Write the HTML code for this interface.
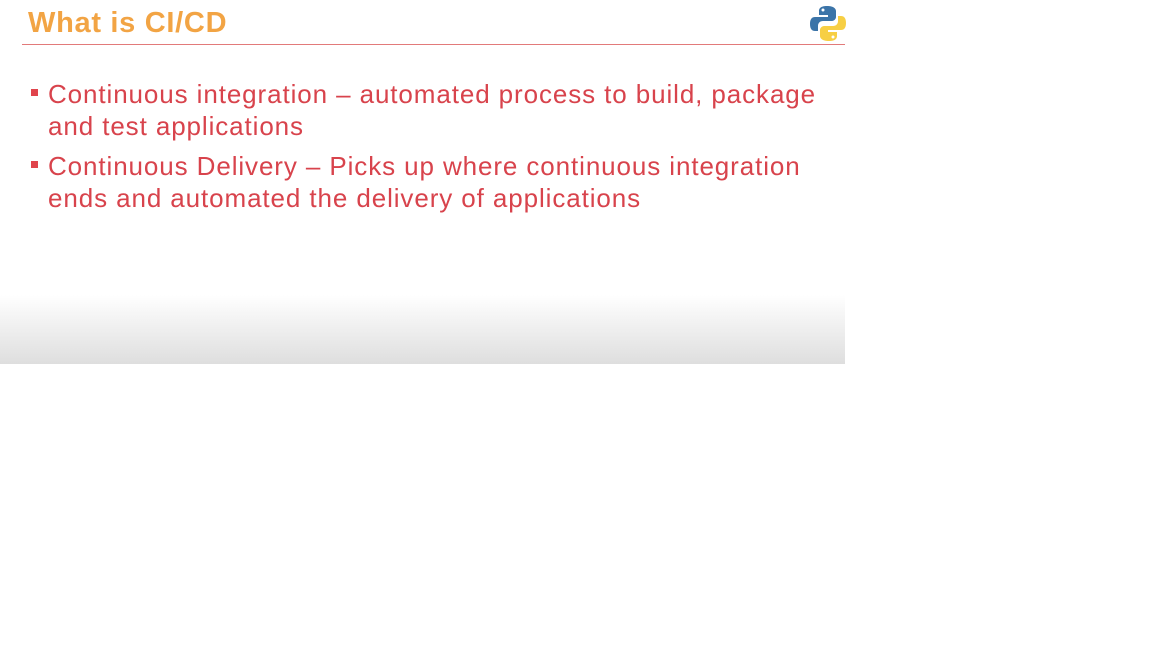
<!DOCTYPE html>
<html><head><style>
body{margin:0;width:1152px;height:648px;background:#fff;position:relative;overflow:hidden;font-family:"Liberation Sans",sans-serif}
.slide{position:absolute;left:0;top:0;width:845px;height:364px;background:linear-gradient(to bottom,#fff 0,#fff 295px,#f3f3f3 320px,#dedede 364px)}
.title{position:absolute;left:28px;top:7px;font-size:29px;font-weight:bold;color:#F2A444;letter-spacing:0.7px}
.line{position:absolute;left:22px;top:44px;width:823px;height:1px;background:#E27A7A}
.b{position:absolute;left:48px;font-size:26px;line-height:32px;color:#D8434C;white-space:nowrap;letter-spacing:0.9px}
.sq{position:absolute;left:31px;width:7px;height:7px;background:#E0444C}
</style></head><body>
<div class="slide">
<div class="title">What is CI/CD</div>
<div class="line"></div>
<svg style="position:absolute;left:810px;top:5px" width="36" height="37" viewBox="0 0 36 37">
<path d="M17 1c-7 0-8 3-8 5v4h9v2H5c-3 0-5 2-5 7s2 7 5 7h3v-5c0-3 2-5 5-5h9c2 0 4-2 4-4V6c0-2-2-5-9-5z" fill="#3B74A8"/>
<circle cx="13" cy="5" r="1.5" fill="#fff"/>
<path d="M19 36c7 0 8-3 8-5v-4h-9v-2h13c3 0 5-2 5-7s-2-7-5-7h-3v5c0 3-2 5-5 5h-9c-2 0-4 2-4 4v6c0 2 2 5 9 5z" fill="#F7CF44"/>
<circle cx="23" cy="32" r="1.5" fill="#fff"/>
</svg>
<div class="sq" style="top:89px"></div>
<div class="b" style="top:78px">Continuous integration – automated process to build, package<br>and test applications</div>
<div class="sq" style="top:161px"></div>
<div class="b" style="top:150px">Continuous Delivery – Picks up where continuous integration<br>ends and automated the delivery of applications</div>
</div>
</body></html>
